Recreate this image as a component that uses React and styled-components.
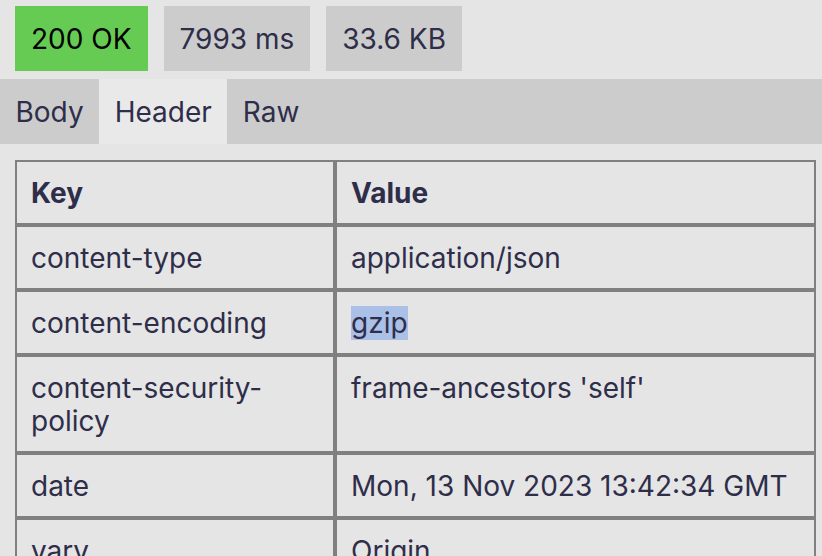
import React from "react";
import styled, { createGlobalStyle } from "styled-components";

const Global = createGlobalStyle`
  html, body { margin: 0; padding: 0; background: #e5e5e5; }
  body {
    font-family: Inter, "Noto Sans", sans-serif;
    font-size: 28px;
    line-height: 33px;
    color: #2e2e4a;
    overflow: hidden;
  }
`;

const Page = styled.div`
  width: 822px;
  height: 556px;
  overflow: hidden;
`;

const StatusBar = styled.div`
  display: flex;
  gap: 16px;
  padding: 6px 15px 8px;
`;

const Badge = styled.div`
  padding: 17px 16px 15px;
  background: ${(p) => (p.$ok ? "#66cb52" : "#cccccc")};
  color: ${(p) => (p.$ok ? "#000" : "#2e2e4a")};
`;

const Tabs = styled.div`
  display: flex;
  background: #cccccc;
`;

const Tab = styled.div`
  padding: 17px 15.5px 15px;
  background: ${(p) => (p.$active ? "#e9e9e9" : "transparent")};
`;

const Content = styled.div`
  padding: 16px 6px 0 15px;
`;

const Table = styled.table`
  width: 100%;
  table-layout: fixed;
  border-collapse: separate;
  border-spacing: 0;
  font-size: 28px;
  line-height: 33px;
`;

const Cell = styled.td`
  border: 2px solid #808080;
  padding: 15px 14px 13px;
  text-align: left;
  vertical-align: top;
  font-weight: ${(p) => (p.$head ? 700 : 400)};
`;

const Selected = styled.span`
  background: #abc0e7;
`;

const rows = [
  ["content-type", "application/json"],
  ["content-encoding", <Selected key="s">gzip</Selected>],
  ["content-security-policy", "frame-ancestors 'self'"],
  ["date", "Mon, 13 Nov 2023 13:42:34 GMT"],
  ["vary", "Origin"],
];

export default function App() {
  return (
    <Page>
      <Global />
      <StatusBar>
        <Badge $ok>200 OK</Badge>
        <Badge>7993 ms</Badge>
        <Badge>33.6 KB</Badge>
      </StatusBar>
      <Tabs>
        <Tab>Body</Tab>
        <Tab $active>Header</Tab>
        <Tab>Raw</Tab>
      </Tabs>
      <Content>
        <Table>
          <colgroup>
            <col style={{ width: "320px" }} />
            <col />
          </colgroup>
          <thead>
            <tr>
              <Cell as="th" $head>Key</Cell>
              <Cell as="th" $head>Value</Cell>
            </tr>
          </thead>
          <tbody>
            {rows.map(([k, v], i) => (
              <tr key={i}>
                <Cell>{k}</Cell>
                <Cell>{v}</Cell>
              </tr>
            ))}
          </tbody>
        </Table>
      </Content>
    </Page>
  );
}
